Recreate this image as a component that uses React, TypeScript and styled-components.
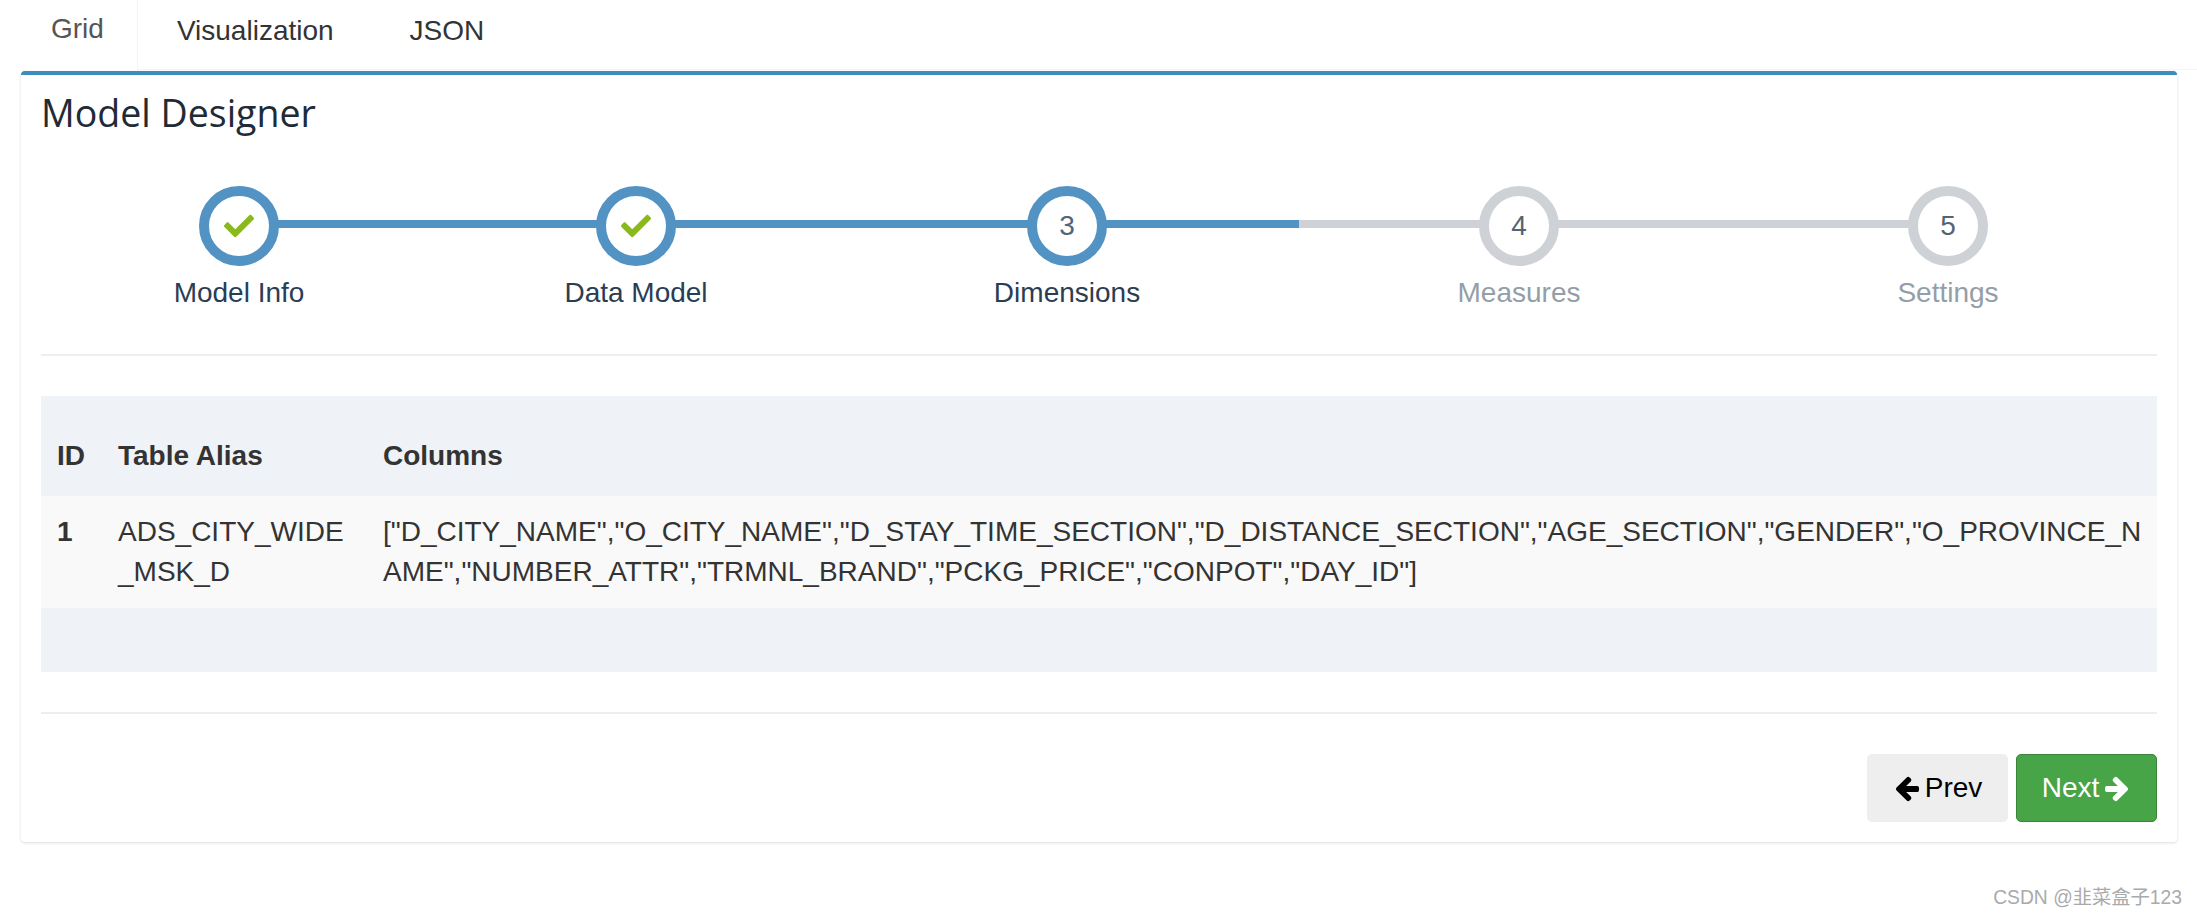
import React from "react";
import styled, { createGlobalStyle } from "styled-components";
import { FaCheck } from "react-icons/fa";

const GlobalStyle = createGlobalStyle`
  html, body { margin: 0; padding: 0; background: #fff; }
  body { font-family: "Liberation Sans", Arial, sans-serif; font-size: 28px; color: #333; }
`;

const Page = styled.div`
  display: flex;
  flex-direction: column;
  width: 2197px;
  height: 917px;
  overflow: hidden;
`;

const TabBar = styled.nav`
  display: flex;
  height: 70px;
  padding-left: 21px;
  box-sizing: border-box;
`;

const Tab = styled.a<{ $active?: boolean }>`
  display: block;
  box-sizing: border-box;
  height: 70px;
  padding: ${(p) => (p.$active ? "13px 33px 0 30px" : "15px 37px 0 39px")};
  line-height: 32px;
  color: ${(p) => (p.$active ? "#555" : "#333")};
  background: #fff;
  border-right: ${(p) => (p.$active ? "1px solid #f4f4f4" : "none")};
  border-bottom: ${(p) => (p.$active ? "none" : "1px solid #f4f4f4")};
`;

const TabRest = styled.span`
  flex: 1;
  border-bottom: 1px solid #f4f4f4;
`;

const Card = styled.section`
  box-sizing: border-box;
  width: 2156px;
  height: 771px;
  margin: 1px 0 0 21px;
  padding: 0 20px;
  background: #fff;
  border-top: 4px solid #3c8dbc;
  border-radius: 4px;
  box-shadow: 0 1px 3px rgba(0, 0, 0, 0.14);
`;

const Title = styled.h3`
  margin: 0;
  padding-top: 14px;
  padding-bottom: 1px;
  font-family: "Open Sans", sans-serif;
  font-size: 37.5px;
  font-weight: 400;
  line-height: 48px;
  color: #212b36;
`;

const Steps = styled.ol`
  display: grid;
  grid-template-columns: 396px 398px 464px 440px 418px;
  list-style: none;
  margin: 48px 0 0;
  padding: 0 0 41px;
  border-bottom: 2px solid #eee;
`;

const Step = styled.li<{ $state: "done" | "active" | "todo"; $edge?: "first" | "last" }>`
  position: relative;
  display: flex;
  flex-direction: column;
  align-items: center;
  color: ${(p) => (p.$state === "todo" ? "#949ea7" : "#2b3d53")};

  &::before {
    content: "";
    position: absolute;
    top: 34px;
    height: 8px;
    left: ${(p) => (p.$edge === "first" ? "50%" : "0")};
    right: ${(p) => (p.$edge === "last" ? "50%" : "0")};
    background: ${(p) => (p.$state === "todo" ? "#ced1d6" : "#5293c4")};
  }
`;

const Bubble = styled.span<{ $lit: boolean }>`
  position: relative;
  box-sizing: border-box;
  display: flex;
  align-items: center;
  justify-content: center;
  width: 80px;
  height: 80px;
  border: 10px solid ${(p) => (p.$lit ? "#5293c4" : "#ced1d6")};
  border-radius: 50%;
  background: #fff;
  color: #546474;
  font-size: 28px;
`;

const Tick = styled(FaCheck)`
  width: 30px;
  height: 30px;
  color: #8ab91a;
`;

const StepName = styled.span`
  margin-top: 7px;
  line-height: 40px;
`;

const GridTable = styled.table`
  width: 2116px;
  margin-top: 40px;
  border-collapse: collapse;
  table-layout: fixed;
  line-height: 40px;
`;

const Head = styled.thead`
  background: #eff2f7;
`;

const HeadCell = styled.th`
  height: 100px;
  box-sizing: border-box;
  padding: 40px 16px 20px;
  text-align: left;
  font-weight: 700;
`;

const BodyRow = styled.tr`
  background: #f9f9f9;
`;

const Cell = styled.td<{ $bold?: boolean; $last?: boolean }>`
  padding: 16px ${(p) => (p.$last ? "10px" : "16px")} 16px 16px;
  vertical-align: top;
  word-break: break-all;
  font-weight: ${(p) => (p.$bold ? 700 : 400)};
`;

const FootRow = styled.tr`
  height: 64px;
  background: #eff2f7;
`;

const Divider = styled.hr`
  height: 2px;
  margin: 40px 0 0;
  border: 0;
  background: #eee;
`;

const Actions = styled.div`
  display: flex;
  justify-content: flex-end;
  gap: 8px;
  margin-top: 40px;
`;

const Button = styled.button<{ $primary?: boolean }>`
  display: flex;
  align-items: center;
  justify-content: center;
  gap: 4px;
  box-sizing: border-box;
  width: 141px;
  height: 68px;
  padding: 0;
  font: inherit;
  color: ${(p) => (p.$primary ? "#fff" : "#000")};
  background: ${(p) => (p.$primary ? "#47a447" : "#eee")};
  border: 1.5px solid ${(p) => (p.$primary ? "#398439" : "#eee")};
  border-radius: 5px;
`;

const Arrow = styled.svg<{ $flip?: boolean }>`
  width: 28px;
  height: 28px;
  fill: currentColor;
  transform: ${(p) => (p.$flip ? "scaleX(-1)" : "none")};
`;

const Watermark = styled.div`
  position: absolute;
  right: 15px;
  top: 885px;
  font-family: "Liberation Sans", "Noto Sans CJK SC", sans-serif;
  font-size: 19.3px;
  line-height: 26px;
  color: #aaa;
`;

const ARROW_PATH =
  "M1664 896v128q0 53-32.5 90.5t-84.5 37.5h-704l293 294q38 36 38 90t-38 90l-75 76q-38 38-91 38-52 0-91-38l-651-652q-38-38-38-90 0-53 38-91l651-650q38-39 91-39 52 0 90 39l75 74q38 38 38 91t-38 91l-293 293h704q52 0 84.5 37.5t32.5 90.5z";

const columnsValue =
  '["D_CITY_NAME","O_CITY_NAME","D_STAY_TIME_SECTION","D_DISTANCE_SECTION","AGE_SECTION","GENDER","O_PROVINCE_NAME","NUMBER_ATTR","TRMNL_BRAND","PCKG_PRICE","CONPOT","DAY_ID"]';

const wizardSteps = [
  { name: "Model Info", state: "done" },
  { name: "Data Model", state: "done" },
  { name: "Dimensions", state: "active" },
  { name: "Measures", state: "todo" },
  { name: "Settings", state: "todo" },
] as const;

export default function App() {
  return (
    <Page>
      <GlobalStyle />
      <TabBar>
        <Tab $active>Grid</Tab>
        <Tab>Visualization</Tab>
        <Tab>JSON</Tab>
        <TabRest />
      </TabBar>
      <Card>
        <Title>Model Designer</Title>
        <Steps>
          {wizardSteps.map((s, i) => (
            <Step
              key={s.name}
              $state={s.state}
              $edge={i === 0 ? "first" : i === wizardSteps.length - 1 ? "last" : undefined}
            >
              <Bubble $lit={s.state !== "todo"}>{s.state === "done" ? <Tick /> : i + 1}</Bubble>
              <StepName>{s.name}</StepName>
            </Step>
          ))}
        </Steps>
        <GridTable>
          <colgroup>
            <col style={{ width: 61 }} />
            <col style={{ width: 265 }} />
            <col />
          </colgroup>
          <Head>
            <tr>
              <HeadCell>ID</HeadCell>
              <HeadCell>Table Alias</HeadCell>
              <HeadCell>Columns</HeadCell>
            </tr>
          </Head>
          <tbody>
            <BodyRow>
              <Cell $bold>1</Cell>
              <Cell>ADS_CITY_WIDE_MSK_D</Cell>
              <Cell $last>{columnsValue}</Cell>
            </BodyRow>
          </tbody>
          <tfoot>
            <FootRow>
              <td colSpan={3} />
            </FootRow>
          </tfoot>
        </GridTable>
        <Divider />
        <Actions>
          <Button>
            <Arrow viewBox="0 0 1792 1792">
              <path d={ARROW_PATH} />
            </Arrow>
            Prev
          </Button>
          <Button $primary>
            Next
            <Arrow viewBox="0 0 1792 1792" $flip>
              <path d={ARROW_PATH} />
            </Arrow>
          </Button>
        </Actions>
      </Card>
      <Watermark>CSDN @韭菜盒子123</Watermark>
    </Page>
  );
}
